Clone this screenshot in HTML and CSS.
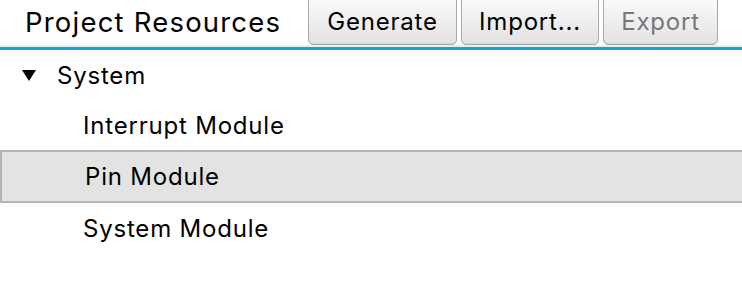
FILE: index.html
```html
<!DOCTYPE html>
<html>
<head>
<meta charset="utf-8">
<link rel="stylesheet" href="styles.css">
</head>
<body>
<div class="header">
  <div class="title">Project Resources</div>
  <div class="buttons">
    <button class="btn btn-generate">Generate</button>
    <button class="btn btn-import">Import...</button>
    <button class="btn btn-export" disabled>Export</button>
  </div>
</div>
<div class="tree">
  <div class="row parent">
    <svg class="arrow" width="14" height="11" viewBox="0 0 14 11"><polygon points="0,0 14,0 7,11" fill="#000"/></svg>
    <span>System</span>
  </div>
  <div class="row child">Interrupt Module</div>
  <div class="row child selected">Pin Module</div>
  <div class="row child">System Module</div>
</div>
</body>
</html>
```

FILE: styles.css
```css
html, body {
  margin: 0;
  padding: 0;
  background: #ffffff;
  font-family: "Inter", "Noto Sans", sans-serif;
  color: #000;
  overflow: hidden;
}

.header {
  display: flex;
  align-items: flex-start;
  height: 45px;
  border-bottom: 2px solid #e3eff6;
  box-shadow: 0 3px 0 #1fa0d9;
  margin-bottom: 3px;
}

.title {
  width: 283px;
  padding-left: 25px;
  font-size: 27.5px;
  line-height: 44px;
  letter-spacing: 1.2px;
  white-space: nowrap;
}

.buttons {
  display: flex;
  gap: 4px;
}

.btn {
  margin-top: -10px;
  height: 55px;
  padding: 8px 0 0 0;
  font-family: inherit;
  font-size: 24px;
  letter-spacing: 0.8px;
  color: #000;
  border: 1px solid #a9a9a9;
  border-radius: 0 0 5px 5px;
  background: linear-gradient(#ffffff, #f3f3f3 40%, #e2e2e2);
  box-shadow: inset 0 -1px 0 #d6d6d6;
  text-align: center;
}

.btn-generate { width: 149px; }
.btn-import { width: 138px; }
.btn-export { width: 115px; color: #777777; }

.tree {
  display: flex;
  flex-direction: column;
}

.row {
  height: 50px;
  display: flex;
  align-items: center;
  font-size: 24px;
  letter-spacing: 0.8px;
  box-sizing: border-box;
}

.parent {
  padding-left: 22px;
}

.arrow {
  margin-right: 21px;
  margin-top: 1px;
}

.child {
  padding-left: 83px;
}

.selected {
  height: 53px;
  background: #e3e3e3;
  border-top: 2px solid #b4b4b4;
  border-bottom: 2px solid #b4b4b4;
  border-left: 2px solid #b4b4b4;
  padding-left: 83px;
  width: 760px;
}
```
